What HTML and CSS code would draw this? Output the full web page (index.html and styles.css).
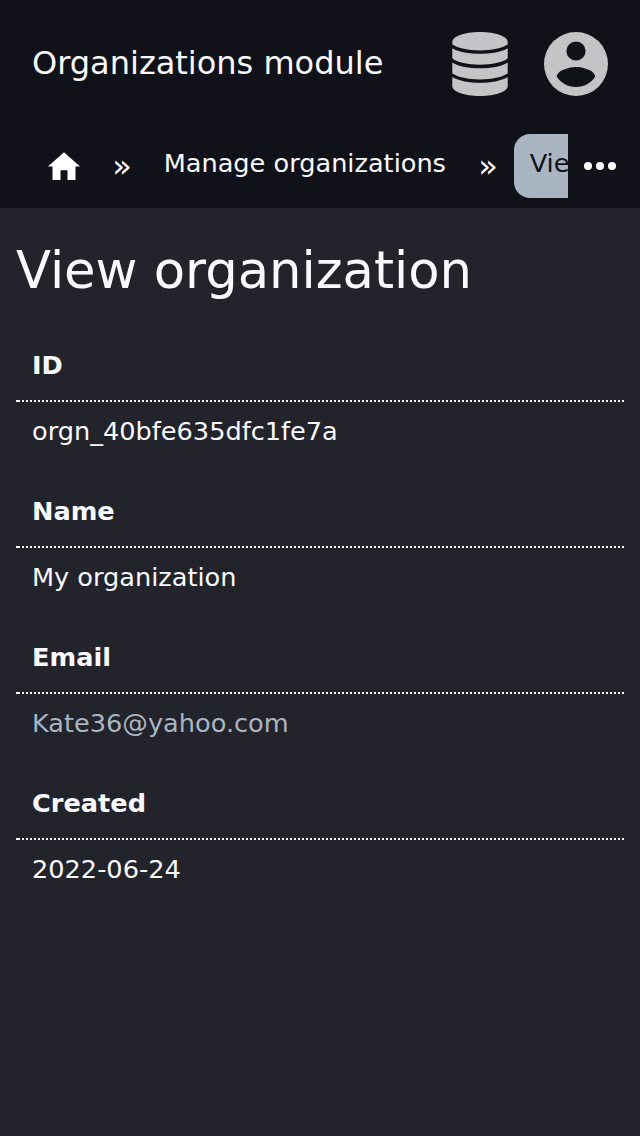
FILE: index.html
```html
<!DOCTYPE html>
<html lang="en">
<head>
<meta charset="utf-8">
<title>View organization</title>
<link rel="stylesheet" href="styles.css">
</head>
<body>
<header class="header">
  <div class="topbar">
    <div class="app-name">Organizations module</div>
    <div class="actions">
      <svg class="action-icon" viewBox="0 0 64 64" aria-label="Database">
        <path d="M4.300 10C4.300 4.500 16 0 32 0S59.700 4.500 59.700 10v2.300C54 16.300 44 18.400 32 18.400S10 16.300 4.300 12.300z"/>
        <path d="M4.300 16.300C11 20.300 21 21.800 32 21.800S53 20.300 59.700 16.300V26.500C54 30.500 44 32.700 32 32.700S10 30.500 4.300 26.500z"/>
        <path d="M4.300 30.600C11 34.800 21 36.300 32 36.300S53 34.800 59.700 30.600V41.500C54 45.300 44 47.400 32 47.400S10 45.300 4.300 41.500z"/>
        <path d="M4.300 45C11 49 21 50.800 32 50.800S53 49 59.700 45V54C59.700 59.500 48 64 32 64S4.300 59.500 4.300 54z"/>
      </svg>
      <svg class="action-icon" viewBox="0 0 64 64" aria-label="Account">
        <path fill-rule="evenodd" d="M32 0a32 32 0 1 0 0 64a32 32 0 0 0 0-64zM32 9.400a9.600 9.600 0 1 1 0 19.200a9.600 9.600 0 0 1 0-19.200zM32 55c-8 0-15.100-4.100-19.200-10.300C12.900 38.300 25.600 35 32 35s19.100 3.300 19.200 9.700C47.100 50.900 40 55 32 55z"/>
      </svg>
    </div>
  </div>
  <nav class="nav">
    <div class="crumbs">
      <a class="crumb home"><svg class="home-icon" viewBox="0 0 32 28"><path d="M16 0.300L32 14.500H27.500V28H19.500V18.200H12.500V28H4.500V14.500H0z"/></svg></a>
      <span class="separator">»</span>
      <a class="crumb">Manage organizations</a>
      <span class="separator">»</span>
      <a class="crumb current">View organization</a>
    </div>
    <svg class="more" viewBox="0 0 24 24" aria-label="More"><circle cx="6" cy="12" r="2"/><circle cx="12" cy="12" r="2"/><circle cx="18" cy="12" r="2"/></svg>
  </nav>
</header>
<main class="main">
  <h1 class="title">View organization</h1>
  <dl class="details">
    <dt class="term">ID</dt><dd class="value">orgn_40bfe635dfc1fe7a</dd>
    <dt class="term">Name</dt><dd class="value">My organization</dd>
    <dt class="term">Email</dt><dd class="value"><a class="link">Kate36@yahoo.com</a></dd>
    <dt class="term">Created</dt><dd class="value">2022-06-24</dd>
  </dl>
</main>
</body>
</html>
```

FILE: styles.css
```css
* { box-sizing: border-box; }
body {
  margin: 0;
  min-height: 100vh;
  background: #23232c;
  color: #f9f9fd;
  font: 25.6px/40px "DejaVu Sans", sans-serif;
}
.header { height: 208px; background: #11111a; }
.topbar {
  display: flex;
  align-items: center;
  justify-content: space-between;
  height: 128px;
  padding: 0 32px;
}
.app-name { font-size: 32px; line-height: 48px; padding-bottom: 2px; }
.actions { display: flex; gap: 32px; }
.action-icon { width: 64px; height: 64px; fill: #c4c4c6; }
.nav { display: flex; align-items: center; height: 76px; }
.crumbs {
  display: flex;
  align-items: center;
  width: 568px;
  height: 64px;
  padding-left: 32px;
  overflow: hidden;
  white-space: nowrap;
}
.crumb {
  flex: none;
  height: 64px;
  padding: 9px 16px 15px 15.700px;
  border-radius: 16px;
}
.home { display: flex; align-items: center; padding: 0 16px; }
.home-icon { width: 32px; height: 28px; fill: #fff; }
.separator { flex: none; width: 52px; padding-bottom: 1px; font-size: 32px; text-align: center; }
.current { background: #a9b5c1; color: #11111a; }
.more { width: 48px; height: 48px; margin-left: 8px; fill: #fff; }
.main { padding: 32px 16px; }
.title { margin: 0; font-size: 51.2px; font-weight: 400; line-height: 60px; }
.details { margin: 32px 0 0; }
.term {
  height: 70px;
  padding: 13px 16px 0;
  background:
    linear-gradient(#fff, #fff) left bottom / 2px 2px no-repeat,
    linear-gradient(90deg, transparent 2px, #fff 2px) left bottom / 4px 2px repeat-x;
  font-weight: 700;
}
.value { height: 76px; margin: 0; padding: 9px 16px 0; }
.link { color: #a9b5c1; }
```
